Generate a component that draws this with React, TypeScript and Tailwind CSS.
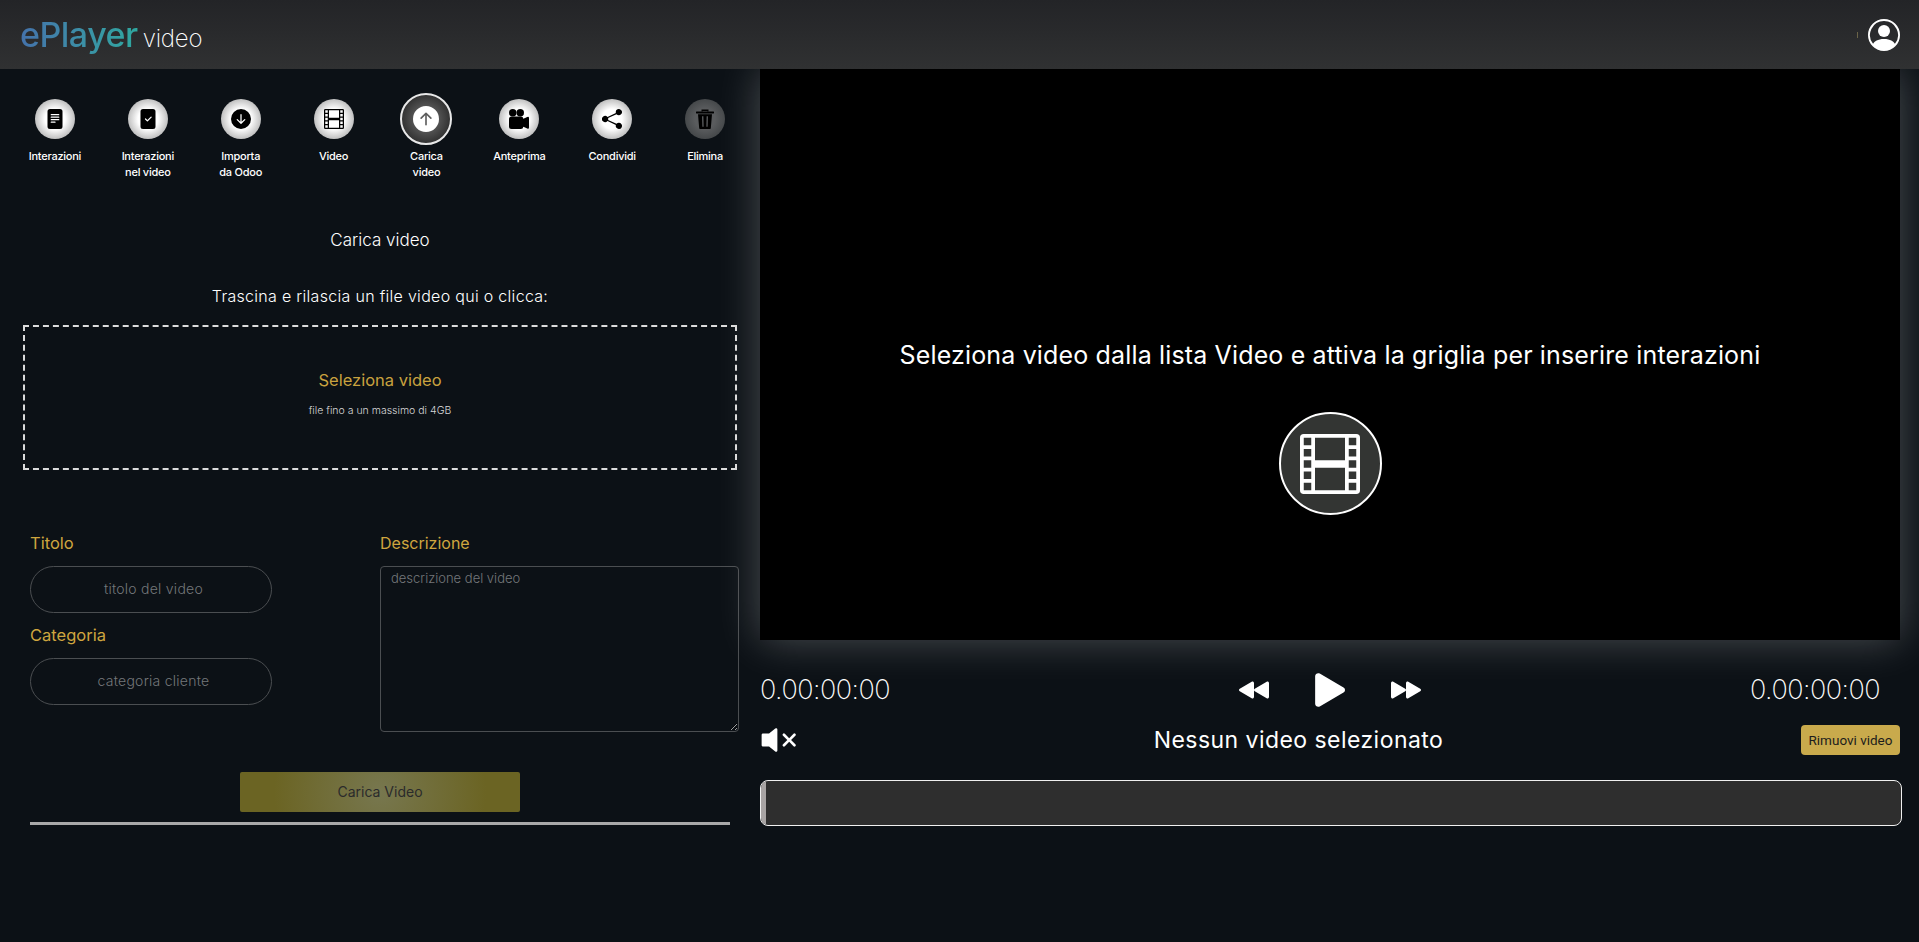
import type { ReactNode } from "react";
import {
  BsArrowDownCircleFill,
  BsArrowUpCircleFill,
  BsCameraReelsFill,
  BsFastForwardFill,
  BsFileCheckFill,
  BsFileTextFill,
  BsFilm,
  BsPersonCircle,
  BsRewindFill,
  BsShareFill,
  BsVolumeMuteFill,
} from "react-icons/bs";

type Tool = { label: string[]; icon: ReactNode; active?: boolean; disabled?: boolean };

function TrashIcon() {
  return (
    <svg viewBox="0 0 18 20" fill="currentColor" className="w-[18px] h-5">
      <path d="M5.5 2.6V.6h7v2h-1.3V1.9H6.8v.7z" />
      <rect x="0" y="2.6" width="18" height="1.9" rx=".4" />
      <path
        fillRule="evenodd"
        d="M2 5.3h14l-1.2 14a.8.8 0 0 1-.8.7H4a.8.8 0 0 1-.8-.7zM6 7.2l.35 10.6h1.3L7.4 7.2zm4.6 0-.25 10.6h1.3L12 7.2z"
      />
    </svg>
  );
}

const tools: Tool[] = [
  { label: ["Interazioni"], icon: <BsFileTextFill size={20} /> },
  { label: ["Interazioni", "nel video"], icon: <BsFileCheckFill size={20} /> },
  { label: ["Importa", "da Odoo"], icon: <BsArrowDownCircleFill size={20} /> },
  { label: ["Video"], icon: <BsFilm size={20} /> },
  { label: ["Carica", "video"], icon: <BsArrowUpCircleFill size={26} />, active: true },
  { label: ["Anteprima"], icon: <BsCameraReelsFill size={20} /> },
  { label: ["Condividi"], icon: <BsShareFill size={20} /> },
  { label: ["Elimina"], icon: <TrashIcon />, disabled: true },
];

function ToolButton({ tool }: { tool: Tool }) {
  let circle =
    "size-10 bg-[radial-gradient(circle_closest-side,#ffffff_50%,#c0c0c0_100%)] text-black";
  if (tool.active) {
    circle =
      "size-[52px] border-2 border-[#e8e8e8] bg-[radial-gradient(circle_closest-side,#5c5c5c_40%,#333333_100%)] text-white";
  }
  if (tool.disabled) {
    circle = "size-10 bg-[radial-gradient(circle_closest-side,#5a5c5e_50%,#45484a_100%)] text-black";
  }
  return (
    <div className="flex flex-col items-center">
      <div className="h-[52px] flex items-center justify-center">
        <div className={`rounded-full flex items-center justify-center ${circle}`}>{tool.icon}</div>
      </div>
      <div className="mt-[3px] text-center text-[11px] leading-4 font-medium text-white tracking-[-0.25px]">
        {tool.label.map((l) => (
          <div key={l}>{l}</div>
        ))}
      </div>
    </div>
  );
}

function LeftPanel() {
  return (
    <div className="w-[760px] shrink-0 pt-6 font-light">
      <div className="grid grid-cols-8 px-[8.5px]">
        {tools.map((t) => (
          <ToolButton key={t.label.join(" ")} tool={t} />
        ))}
      </div>
      <div className="mt-12 text-center text-[17px] leading-6 text-white">Carica video</div>
      <div className="mt-8 text-center text-base leading-6 text-white tracking-[0.3px]">
        Trascina e rilascia un file video qui o clicca:
      </div>
      <div className="mt-[17px] ml-[23px] w-[714px] h-[145px] border-2 border-dashed border-[#dcdcdc] flex flex-col items-center pt-[41px]">
        <div className="text-[16.5px] leading-6 font-normal text-[#c9a23f]">Seleziona video</div>
        <div className="mt-3 text-[10.5px] leading-[14px] text-[#d8d8d8]">file fino a un massimo di 4GB</div>
      </div>
      <div className="mt-[61px] ml-[30px] flex items-start">
        <div className="w-[350px] shrink-0">
          <div className="text-[16.5px] leading-6 font-normal text-[#cfa63f]">Titolo</div>
          <input
            placeholder="titolo del video"
            className="mt-[11px] block w-[242px] h-[47px] rounded-3xl border border-[#4b4e51] bg-transparent pl-[5px] pb-[2px] text-center text-sm tracking-[0.25px] outline-none placeholder:text-[#74777a]"
          />
          <div className="mt-[10px] text-[16.5px] leading-6 font-normal text-[#cfa63f]">Categoria</div>
          <input
            placeholder="categoria cliente"
            className="mt-[11px] block w-[242px] h-[47px] rounded-3xl border border-[#4b4e51] bg-transparent pl-[5px] pb-[2px] text-center text-sm tracking-[0.25px] outline-none placeholder:text-[#74777a]"
          />
        </div>
        <div>
          <div className="text-base leading-6 font-normal text-[#cfa63f]">Descrizione</div>
          <textarea
            placeholder="descrizione del video"
            className="mt-[11px] block w-[359px] h-[166px] rounded border border-[#4b4e51] bg-transparent px-[10px] py-[2px] text-[13px] outline-none placeholder:text-[#74777a]"
          />
        </div>
      </div>
      <div className="mt-10 flex justify-center">
        <button className="w-[280px] h-10 pb-px rounded-[2px] bg-[radial-gradient(circle,#77774f_0%,#6b6423_75%)] text-sm font-normal text-[#2b2b2b]">
          Carica Video
        </button>
      </div>
      <div className="mt-[10px] ml-[30px] w-[700px] h-[3px] bg-[#a9a9a9]" />
    </div>
  );
}

function Player() {
  return (
    <div className="w-[1140px] shrink-0">
      <div className="h-[571px] bg-black shadow-[0_0_40px_rgba(255,255,255,0.26)] flex flex-col items-center pt-[268px]">
        <div className="text-[25px] leading-9 font-normal text-white tracking-[0.15px]">
          Seleziona video dalla lista Video e attiva la griglia per inserire interazioni
        </div>
        <div className="mt-[39px] size-[103px] rounded-full border-2 border-white bg-[#333533] flex items-center justify-center text-white">
          <BsFilm size={60} />
        </div>
      </div>
      <div className="mt-[30px] h-10 flex items-center justify-between text-white">
        <div className="w-[150px] text-[27px] font-extralight leading-10 tracking-[-0.5px]">0.00:00:00</div>
        <div className="flex items-center gap-[45px]">
          <BsRewindFill size={30} />
          <svg viewBox="3.95 3.45 8.05 9.1" fill="currentColor" className="w-8 h-[34px]">
            <path d="m11.596 8.697-6.363 3.692c-.54.313-1.233-.066-1.233-.697V4.308c0-.63.692-1.01 1.233-.696l6.363 3.692a.802.802 0 0 1 0 1.393" />
          </svg>
          <BsFastForwardFill size={30} />
        </div>
        <div className="w-[150px] pr-5 text-right text-[27px] font-extralight leading-10 tracking-[-0.5px]">0.00:00:00</div>
      </div>
      <div className="mt-[15px] h-[30px] flex items-center justify-between text-white">
        <div className="w-9 flex items-center">
          <BsVolumeMuteFill size={42} className="shrink-0 -ml-[1px]" />
        </div>
        <div className="text-[23px] leading-[30px] font-normal tracking-[0.45px]">Nessun video selezionato</div>
        <button className="w-[99px] h-[30px] rounded bg-[#c9aa4c] text-[13.5px] font-['Roboto',sans-serif] text-[#1c1c1c]">
          Rimuovi video
        </button>
      </div>
      <div className="mt-[25px] w-[1142px] h-[46px] rounded-lg border border-[#f0f0f0] bg-[#2e2e2e] overflow-hidden">
        <div className="w-[5px] h-full bg-[#a8a4a4]" />
      </div>
    </div>
  );
}

export default function App() {
  return (
    <div className="h-[942px] w-full overflow-hidden bg-[#0c1116] font-['Inter',sans-serif]">
      <header className="relative z-10 h-[69px] px-5 flex items-center justify-between bg-linear-to-b from-[#232427] to-[#303132]">
        <div className="flex items-baseline gap-[5px]">
          <span className="text-[34px] font-medium tracking-[-0.5px] bg-linear-to-r from-[#4472ab] to-[#2ea8a0] bg-clip-text text-transparent">
            ePlayer
          </span>
          <span className="text-2xl font-extralight tracking-[-0.2px] text-white">video</span>
        </div>
        <div className="flex items-center gap-[10px] mr-[-1px]">
          <div className="w-px h-[6px] bg-[#6b6448]" />
          <BsPersonCircle size={32} className="text-white" />
        </div>
      </header>
      <main className="flex">
        <LeftPanel />
        <Player />
      </main>
    </div>
  );
}
